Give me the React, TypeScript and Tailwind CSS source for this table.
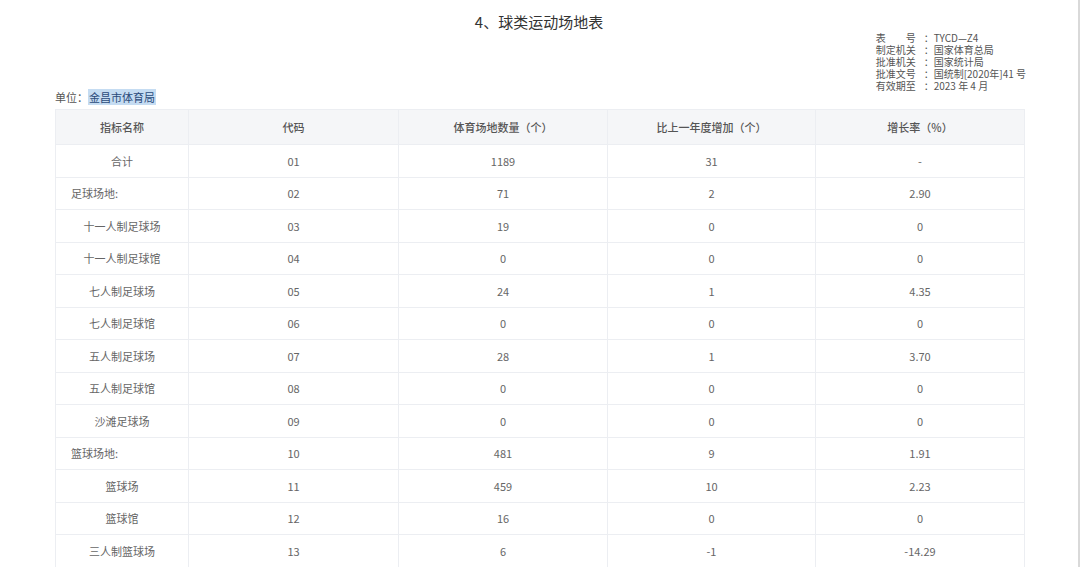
import React from 'react';

const rows: { name: string; code: string; count: string; inc: string; rate: string; left?: boolean }[] = [
  { name: '合计', code: '01', count: '1189', inc: '31', rate: '-' },
  { name: '足球场地:', code: '02', count: '71', inc: '2', rate: '2.90', left: true },
  { name: '十一人制足球场', code: '03', count: '19', inc: '0', rate: '0' },
  { name: '十一人制足球馆', code: '04', count: '0', inc: '0', rate: '0' },
  { name: '七人制足球场', code: '05', count: '24', inc: '1', rate: '4.35' },
  { name: '七人制足球馆', code: '06', count: '0', inc: '0', rate: '0' },
  { name: '五人制足球场', code: '07', count: '28', inc: '1', rate: '3.70' },
  { name: '五人制足球馆', code: '08', count: '0', inc: '0', rate: '0' },
  { name: '沙滩足球场', code: '09', count: '0', inc: '0', rate: '0' },
  { name: '篮球场地:', code: '10', count: '481', inc: '9', rate: '1.91', left: true },
  { name: '篮球场', code: '11', count: '459', inc: '10', rate: '2.23' },
  { name: '篮球馆', code: '12', count: '16', inc: '0', rate: '0' },
  { name: '三人制篮球场', code: '13', count: '6', inc: '-1', rate: '-14.29' },
];

const meta = [
  ['表　　号', 'TYCD—Z4'],
  ['制定机关', '国家体育总局'],
  ['批准机关', '国家统计局'],
  ['批准文号', '国统制[2020年]41 号'],
  ['有效期至', '2023 年 4 月'],
];

export default function App() {
  return (
    <div
      className="w-[1080px] h-[567px] overflow-hidden bg-white border-r-2 border-[#d9d9d9] text-[#666]"
      style={{ fontFamily: '"Noto Sans CJK SC", "Noto Sans", sans-serif' }}
    >
      <div className="pt-[11px] text-center text-[15px] text-[#333] leading-[22px]">4、球类运动场地表</div>

      <div className="flex justify-end pr-[52px] -mt-[1px]">
        <div className="text-[10px] leading-[12px] text-[#555]">
          {meta.map(([k, v]) => (
            <div key={k} className="flex h-[12px]">
              <span className="w-[46px] whitespace-pre">{k}</span>
              <span className="pl-[2px]">：{v}</span>
            </div>
          ))}
        </div>
      </div>

      <div className="pl-[55px] -mt-[2px] text-[11px] leading-[14px] text-[#555]">
        单位：<span className="bg-[#c5dcf2] text-[#2a4a7a] px-[1px]">金昌市体育局</span>
      </div>

      <table className="ml-[55px] mt-[5px] w-[969px] border-collapse table-fixed text-[11px]">
        <colgroup>
          <col className="w-[133px]" />
          <col className="w-[210px]" />
          <col className="w-[209px]" />
          <col className="w-[208px]" />
          <col className="w-[209px]" />
        </colgroup>
        <thead>
          <tr className="bg-[#f5f6f8] text-[#555] h-[35px]">
            {['指标名称', '代码', '体育场地数量（个）', '比上一年度增加（个）', '增长率（%）'].map((h) => (
              <th key={h} className="border border-[#eceef2] font-medium">
                {h}
              </th>
            ))}
          </tr>
        </thead>
        <tbody>
          {rows.map((r) => (
            <tr key={r.code} className="h-[32.5px]">
              <td className={`border border-[#eceef2] ${r.left ? 'text-left pl-[15px]' : 'text-center'}`}>{r.name}</td>
              <td className="border border-[#eceef2] text-center">{r.code}</td>
              <td className="border border-[#eceef2] text-center">{r.count}</td>
              <td className="border border-[#eceef2] text-center">{r.inc}</td>
              <td className="border border-[#eceef2] text-center">{r.rate}</td>
            </tr>
          ))}
        </tbody>
      </table>
    </div>
  );
}
